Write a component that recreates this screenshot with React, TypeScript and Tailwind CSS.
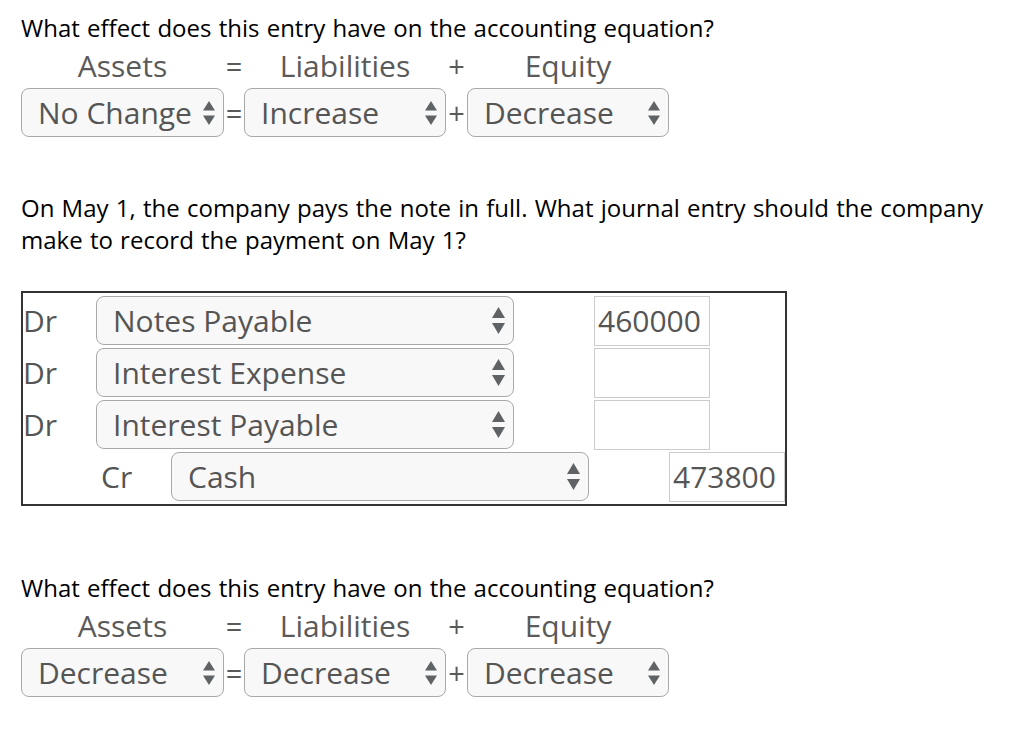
import React from 'react';

const font = "font-['Open_Sans',_'Noto_Sans',_sans-serif]";

function Arrows({ w = 12, h = 24 }: { w?: number; h?: number }) {
  const half = h / 2;
  return (
    <svg width={w} height={h} viewBox={`0 0 ${w} ${h}`} className="shrink-0">
      <polygon points={`${w / 2},0 ${w},${half - 2.5} 0,${half - 2.5}`} fill="#5f6366" />
      <polygon points={`0,${half + 2.5} ${w},${half + 2.5} ${w / 2},${h}`} fill="#5f6366" />
    </svg>
  );
}

function Select({ value, className, big }: { value: string; className: string; big?: boolean }) {
  return (
    <div
      className={`flex items-center justify-between rounded-[8px] border border-[#a9a9a9] bg-[#f8f8f8] pl-[16px] pr-[8px] text-[30px] leading-none text-[#555] ${className}`}
    >
      <span>{value}</span>
      {big ? <Arrows w={13} h={27} /> : <Arrows w={12} h={24} />}
    </div>
  );
}

function Equation({ values, className }: { values: string[]; className?: string }) {
  const cols = 'grid grid-cols-[203px_20px_202px_21px_202px]';
  return (
    <div className={className}>
      <p className="h-[30px] text-[24px] leading-[30px] text-black [word-spacing:1px]">
        What effect does this entry have on the accounting equation?
      </p>
      <div className={`${cols} mt-[3px] h-[40px] text-center text-[30px] leading-[40px] text-[#5a5a5a]`}>
        <span>Assets</span>
        <span className="text-[29px]">=</span>
        <span>Liabilities</span>
        <span className="text-[29px]">+</span>
        <span>Equity</span>
      </div>
      <div className={`${cols} mt-[2px] h-[49px] items-center text-center text-[29px] leading-none text-[#5a5a5a]`}>
        <Select value={values[0]} className="h-[49px]" />
        <span>=</span>
        <Select value={values[1]} className="h-[49px]" />
        <span>+</span>
        <Select value={values[2]} className="h-[49px]" />
      </div>
    </div>
  );
}

function Amount({ value }: { value?: string }) {
  return (
    <div className="flex h-[50px] w-[116px] items-center border border-[#ccc] bg-white pl-[3px] text-[30px] text-[#555]">
      {value}
    </div>
  );
}

const debits = [
  { account: 'Notes Payable', amount: '460000' },
  { account: 'Interest Expense', amount: '' },
  { account: 'Interest Payable', amount: '' },
];

export default function App() {
  return (
    <div className={`${font} h-[730px] w-[1024px] overflow-hidden bg-white pl-[21px]`}>
      <Equation values={['No Change', 'Increase', 'Decrease']} className="pt-[13px]" />

      <p className="mt-[55px] w-[990px] text-[24px] leading-[32px] text-black [word-spacing:1px]">
        On May 1, the company pays the note in full. What journal entry should the company make to record the payment on May 1?
      </p>

      <div className="mt-[35px] flex w-[766px] flex-col gap-[3px] border-2 border-[#333] pb-[3px] pt-[3px] text-[30px] text-[#555]">
        {debits.map((row) => (
          <div key={row.account} className="flex h-[49px] items-center">
            <span className="w-[73px]">Dr</span>
            <Select value={row.account} className="h-[49px] w-[418px]" big />
            <div className="ml-[80px]">
              <Amount value={row.amount} />
            </div>
          </div>
        ))}
        <div className="flex h-[49px] items-center pl-[78px]">
          <span className="w-[70px]">Cr</span>
          <Select value="Cash" className="h-[49px] w-[418px]" big />
          <div className="ml-[80px]">
            <Amount value="473800" />
          </div>
        </div>
      </div>

      <Equation values={['Decrease', 'Decrease', 'Decrease']} className="mt-[67px]" />
    </div>
  );
}
